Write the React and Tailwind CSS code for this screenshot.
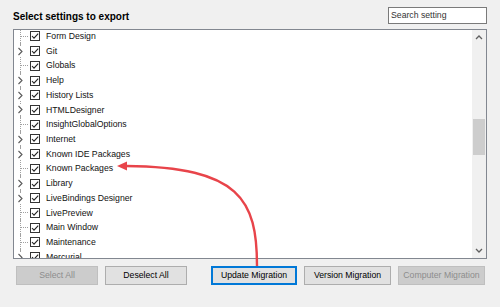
import React from 'react';

const items = [
	['Form Design', false],
	['Git', true],
	['Globals', false],
	['Help', true],
	['History Lists', true],
	['HTMLDesigner', true],
	['InsightGlobalOptions', false],
	['Internet', true],
	['Known IDE Packages', true],
	['Known Packages', false],
	['Library', true],
	['LiveBindings Designer', true],
	['LivePreview', false],
	['Main Window', false],
	['Maintenance', false],
	['Mercurial', true],
];

const Connector = ({ expandable }) => (
	<svg width="16" height="15" viewBox="0 0 16 15" className="shrink-0 overflow-visible">
		<line x1="6.5" y1="-1" x2="6.5" y2="16" stroke="#a0a0a0" strokeDasharray="1 1" />
		{expandable ? (
			<>
				<rect x="3" y="3" width="7" height="9" fill="#fff" />
				<path d="M4.5 4 L8 7.5 L4.5 11" fill="none" stroke="#5a5a5a" strokeWidth="1.1" />
			</>
		) : (
			<line x1="7" y1="7.5" x2="15" y2="7.5" stroke="#a0a0a0" strokeDasharray="1 1" />
		)}
	</svg>
);

const Check = () => (
	<svg width="10" height="10" viewBox="0 0 10 10" className="shrink-0">
		<rect x="0.5" y="0.5" width="9" height="9" fill="#fff" stroke="#333" />
		<path d="M2 5 L4 7.2 L8.2 2.6" fill="none" stroke="#222" strokeWidth="1.1" />
	</svg>
);

const Btn = ({ children, className, disabled, focused }) => (
	<button
		className={`h-[19px] ${className} flex items-center justify-center text-[8.7px] leading-none ${
			disabled
				? 'border bg-[#cccccc] border-[#bfbfbf] text-[#8d8d8d]'
				: focused
				? 'bg-[#e1e1e1] border-2 border-[#0078d7] text-black'
				: 'border bg-[#e1e1e1] border-[#adadad] text-black'
		}`}
	>
		{children}
	</button>
);

export default function App() {
	return (
		<div className="relative w-[500px] h-[307px] bg-[#f0f0f0] overflow-hidden" style={{ fontFamily: '"Liberation Sans", Arial, sans-serif' }}>
			{/* header */}
			<div className="flex items-end justify-between pt-[7px] pl-[13px] pr-[13px]">
				<div className="text-[10px] font-bold text-black leading-[12px] pb-[1px]">Select settings to export</div>
				<div className="w-[99px] h-[17px] bg-white border border-[#7a7a7a] flex items-center pl-[2px] text-[8.7px] text-[#333]">
					Search setting
				</div>
			</div>

			{/* tree */}
			<div className="mt-[5px] ml-[13px] w-[474px] h-[230px] border border-[#828790] bg-white flex overflow-hidden">
				<div className="flex-1 overflow-hidden">
					<div className="-mt-[1px]">
						{items.map(([label, exp]) => (
							<div key={label} className="h-[14.73px] flex items-center">
								<Connector expandable={exp} />
								<Check />
								<span className="ml-[6px] text-[8.7px] leading-none text-[#111] whitespace-nowrap">{label}</span>
							</div>
						))}
					</div>
				</div>
				<div className="w-[14px] bg-[#f0f0f0] flex flex-col items-center">
					<svg width="14" height="15" viewBox="0 0 14 15">
						<path d="M4 9 L7 6 L10 9" fill="none" stroke="#606060" strokeWidth="1.3" />
					</svg>
					<div className="mt-[74px] w-[12px] h-[36px] bg-[#cdcdcd]" />
					<div className="flex-1" />
					<svg width="14" height="15" viewBox="0 0 14 15">
						<path d="M4 6 L7 9 L10 6" fill="none" stroke="#606060" strokeWidth="1.3" />
					</svg>
				</div>
			</div>

			{/* buttons */}
			<div className="mt-[7px] pl-[16px] flex">
				<Btn className="w-[82px]" disabled>Select All</Btn>
				<Btn className="w-[82px] ml-[7px]">Deselect All</Btn>
				<Btn className="w-[86px] ml-[24px]" focused>Update Migration</Btn>
				<Btn className="w-[87px] ml-[7px]">Version Migration</Btn>
				<Btn className="w-[87px] ml-[7px]" disabled>Computer Migration</Btn>
			</div>

			{/* annotation arrow */}
			<svg className="absolute inset-0 pointer-events-none" width="500" height="307" viewBox="0 0 500 307">
				<path d="M257 266 C257 200 240 167 126 166" fill="none" stroke="#e8444a" strokeWidth="2.4" />
				<path d="M117 166 L127 161.5 L127 170.5 Z" fill="#e8444a" />
			</svg>
		</div>
	);
}
